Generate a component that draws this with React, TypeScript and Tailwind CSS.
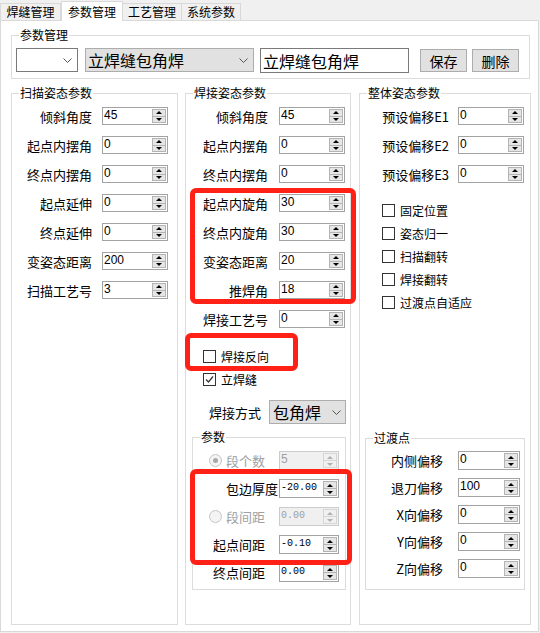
import React from "react";

const CJK = "font-['Noto_Sans_CJK_SC','Liberation_Sans',sans-serif]";

function Arrow({ up, disabled }: { up: boolean; disabled?: boolean }) {
  const cls = up
    ? disabled
      ? "border-b-[3px] border-b-[#b0b0b0]"
      : "border-b-[3px] border-b-black"
    : disabled
      ? "border-t-[3px] border-t-[#b0b0b0]"
      : "border-t-[3px] border-t-black";
  return <div className={`h-0 w-0 border-x-[3px] border-x-transparent ${cls}`} />;
}

function Spin({
  value,
  cls,
  disabled,
  mono,
}: {
  value: string;
  cls: string;
  disabled?: boolean;
  mono?: boolean;
}) {
  return (
    <div
      className={`${cls} flex shrink-0 border ${
        disabled ? "border-[#cccccc] bg-[#f0f0f0]" : "border-[#a3a3a3] bg-white"
      }`}
    >
      <div
        className={`flex-1 pl-[1px] pt-[1px] leading-[13px] ${
          mono
            ? "font-['Liberation_Mono',monospace] text-[10px]"
            : "font-['Liberation_Sans',sans-serif] text-[12px]"
        } ${disabled ? "text-[#a0a0a0]" : "text-black"}`}
      >
        {value}
      </div>
      <div className="flex w-[15px] flex-col py-[1px] pr-[1px]">
        <div
          className={`flex flex-1 items-center justify-center border ${
            disabled ? "border-[#d6d6d6] bg-[#f0f0f0]" : "border-[#b4b4b4] bg-[#e6e6e6]"
          }`}
        >
          <Arrow up disabled={disabled} />
        </div>
        <div
          className={`flex flex-1 items-center justify-center border border-t-0 ${
            disabled ? "border-[#d6d6d6] bg-[#f0f0f0]" : "border-[#b4b4b4] bg-[#e6e6e6]"
          }`}
        >
          <Arrow up={false} disabled={disabled} />
        </div>
      </div>
    </div>
  );
}

function Chevron() {
  return (
    <svg width="9" height="5" viewBox="0 0 9 5" className="shrink-0">
      <path d="M0.5 0.5 L4.5 4.5 L8.5 0.5" fill="none" stroke="#555555" strokeWidth="1" />
    </svg>
  );
}

function Group({
  title,
  cls,
  children,
}: {
  title: string;
  cls: string;
  children?: React.ReactNode;
}) {
  return (
    <div className={`relative shrink-0 border border-[#dcdcdc] ${cls}`}>
      <span className="absolute left-[7px] top-[-8px] bg-white px-[1px] text-[12px] leading-[14px] whitespace-nowrap">
        {title}
      </span>
      {children}
    </div>
  );
}

function Check({ label, checked }: { label: string; checked?: boolean }) {
  return (
    <div className="flex h-[13px] items-center">
      <div className="flex h-[13px] w-[13px] shrink-0 items-center justify-center border border-[#333333] bg-white">
        {checked && (
          <svg width="9" height="9" viewBox="0 0 9 9">
            <path d="M1 4.5 L3.5 7 L8 1.5" fill="none" stroke="#333333" strokeWidth="1.2" />
          </svg>
        )}
      </div>
      <span className="ml-[5px] text-[12px] leading-none whitespace-nowrap">{label}</span>
    </div>
  );
}

function Radio({ checked }: { checked?: boolean }) {
  return (
    <div className="flex h-[13px] w-[13px] shrink-0 items-center justify-center rounded-full border border-[#c4c4c4] bg-[#f4f4f4]">
      {checked && <div className="h-[5px] w-[5px] rounded-full bg-[#a8a8a8]" />}
    </div>
  );
}

function Row({
  label,
  value,
  rowCls,
  spinCls,
}: {
  label: string;
  value: string;
  rowCls: string;
  spinCls: string;
}) {
  return (
    <div className={`flex items-center justify-end ${rowCls}`}>
      <span className="text-[13px] leading-none whitespace-nowrap">{label}</span>
      <Spin value={value} cls={spinCls} />
    </div>
  );
}

export default function App() {
  const leftRows: [string, string][] = [
    ["倾斜角度", "45"],
    ["起点内摆角", "0"],
    ["终点内摆角", "0"],
    ["起点延伸", "0"],
    ["终点延伸", "0"],
    ["变姿态距离", "200"],
    ["扫描工艺号", "3"],
  ];
  const midRows: [string, string][] = [
    ["倾斜角度", "45"],
    ["起点内摆角", "0"],
    ["终点内摆角", "0"],
    ["起点内旋角", "30"],
    ["终点内旋角", "30"],
    ["变姿态距离", "20"],
    ["推焊角", "18"],
    ["焊接工艺号", "0"],
  ];
  const rightRows: [string, string][] = [
    ["预设偏移E1", "0"],
    ["预设偏移E2", "0"],
    ["预设偏移E3", "0"],
  ];
  const transRows: [string, string][] = [
    ["内侧偏移", "0"],
    ["退刀偏移", "100"],
    ["X向偏移", "0"],
    ["Y向偏移", "0"],
    ["Z向偏移", "0"],
  ];

  return (
    <div className={`relative h-[633px] w-[540px] overflow-hidden bg-[#f0f0f0] text-black ${CJK}`}>
      {/* Tabs */}
      <div className="flex h-[20px] items-end">
        <div className="flex h-[17px] w-[61px] items-center justify-center border border-b-0 border-[#d9d9d9] bg-[#f0f0f0] text-[12px] leading-none">
          焊缝管理
        </div>
        <div className="relative z-10 -mb-px flex h-[20px] w-[62px] items-center justify-center border border-b-0 border-[#d9d9d9] bg-white text-[12px] leading-none">
          参数管理
        </div>
        <div className="flex h-[17px] w-[59px] items-center justify-center border border-b-0 border-l-0 border-[#d9d9d9] bg-[#f0f0f0] text-[12px] leading-none">
          工艺管理
        </div>
        <div className="flex h-[17px] w-[59px] items-center justify-center border border-b-0 border-l-0 border-[#d9d9d9] bg-[#f0f0f0] text-[12px] leading-none">
          系统参数
        </div>
      </div>

      {/* Panel */}
      <div className="h-[612px] w-[539px] border border-[#d9d9d9] bg-white pl-[10px]">
        <Group title="参数管理" cls="mt-[14px] h-[44px] w-[519px]">
          <div className="flex items-start pl-[4px] pt-[12px]">
            <div className="flex h-[24px] w-[62px] items-center justify-end border border-[#7a7a7a] bg-white pr-[5px]">
              <Chevron />
            </div>
            <div className="ml-[7px] flex h-[24px] w-[169px] items-center justify-between border border-[#adadad] bg-[#e1e1e1] pl-[2px] pr-[5px]">
              <span className="text-[16px] leading-none whitespace-nowrap">立焊缝包角焊</span>
              <Chevron />
            </div>
            <div className="ml-[6px] flex h-[25px] w-[149px] items-center border border-[#7a7a7a] bg-white pl-[2px]">
              <span className="text-[16px] leading-none whitespace-nowrap">立焊缝包角焊</span>
            </div>
            <div className="ml-[11px] mt-[1px] flex h-[23px] w-[47px] items-center justify-center border border-[#adadad] bg-[#e1e1e1] text-[14px] leading-none">
              保存
            </div>
            <div className="ml-[5px] mt-[1px] flex h-[23px] w-[47px] items-center justify-center border border-[#adadad] bg-[#e1e1e1] text-[14px] leading-none">
              删除
            </div>
          </div>
        </Group>

        <div className="mt-[14px] flex">
          {/* Left group */}
          <Group title="扫描姿态参数" cls="h-[532px] w-[167px]">
            <div className="flex flex-col gap-[11px] pt-[13px]">
              {leftRows.map(([l, v]) => (
                <Row key={l} label={l} value={v} rowCls="h-[18px] gap-[10px] pr-[9px]" spinCls="h-[18px] w-[66px]" />
              ))}
            </div>
          </Group>

          {/* Middle group */}
          <Group title="焊接姿态参数" cls="ml-[7px] flex h-[532px] w-[166px] flex-col">
            <div className="flex flex-col gap-[11px] pt-[13px]">
              {midRows.map(([l, v]) => (
                <Row key={l} label={l} value={v} rowCls="h-[18px] gap-[11px] pr-[5px]" spinCls="h-[18px] w-[66px]" />
              ))}
            </div>
            <div className="mt-[22px] pl-[17px]">
              <Check label="焊接反向" />
            </div>
            <div className="mt-[10px] pl-[17px]">
              <Check label="立焊缝" checked />
            </div>
            <div className="mt-[14px] flex h-[24px] items-center justify-end gap-[8px] pr-[4px]">
              <span className="text-[13px] leading-none whitespace-nowrap">焊接方式</span>
              <div className="flex h-[24px] w-[77px] items-center justify-between border border-[#adadad] bg-[#e1e1e1] pl-[3px] pr-[4px]">
                <span className="text-[16px] leading-none whitespace-nowrap">包角焊</span>
                <Chevron />
              </div>
            </div>
            <Group title="参数" cls="ml-[6px] mt-[13px] h-[153px] w-[154px]">
              <div className="flex flex-col gap-[9px] pt-[13px]">
                <div className="flex h-[19px] items-center pl-[16px] pr-[6px]">
                  <Radio checked />
                  <span className="ml-[4px] text-[13px] leading-none text-[#a0a0a0] whitespace-nowrap">段个数</span>
                  <div className="ml-auto">
                    <Spin value="5" cls="h-[19px] w-[60px]" disabled />
                  </div>
                </div>
                <div className="flex h-[19px] items-center justify-end gap-[1px] pr-[6px]">
                  <span className="text-[13px] leading-none whitespace-nowrap">包边厚度</span>
                  <Spin value="-20.00" cls="h-[19px] w-[60px]" mono />
                </div>
                <div className="flex h-[19px] items-center pl-[16px] pr-[6px]">
                  <Radio />
                  <span className="ml-[4px] text-[13px] leading-none text-[#a0a0a0] whitespace-nowrap">段间距</span>
                  <div className="ml-auto">
                    <Spin value="0.00" cls="h-[19px] w-[60px]" disabled mono />
                  </div>
                </div>
                <div className="flex h-[19px] items-center pl-[20px] pr-[6px]">
                  <span className="text-[13px] leading-none whitespace-nowrap">起点间距</span>
                  <div className="ml-auto">
                    <Spin value="-0.10" cls="h-[19px] w-[60px]" mono />
                  </div>
                </div>
                <div className="flex h-[19px] items-center pl-[20px] pr-[6px]">
                  <span className="text-[13px] leading-none whitespace-nowrap">终点间距</span>
                  <div className="ml-auto">
                    <Spin value="0.00" cls="h-[19px] w-[60px]" mono />
                  </div>
                </div>
              </div>
            </Group>
          </Group>

          {/* Right group */}
          <Group title="整体姿态参数" cls="ml-[8px] flex h-[532px] w-[172px] flex-col">
            <div className="flex flex-col gap-[11px] pt-[13px]">
              {rightRows.map(([l, v]) => (
                <Row key={l} label={l} value={v} rowCls="h-[18px] gap-[9px] pr-[6px]" spinCls="h-[18px] w-[66px]" />
              ))}
            </div>
            <div className="mt-[21px] flex flex-col gap-[10px] pl-[22px]">
              <Check label="固定位置" />
              <Check label="姿态归一" />
              <Check label="扫描翻转" />
              <Check label="焊接翻转" />
              <Check label="过渡点自适应" />
            </div>
            <Group title="过渡点" cls="mb-[34px] ml-[5px] mt-auto h-[152px] w-[160px]">
              <div className="flex flex-col gap-[8px] pt-[12px]">
                {transRows.map(([l, v]) => (
                  <Row key={l} label={l} value={v} rowCls="h-[19px] gap-[15px] pr-[4px]" spinCls="h-[19px] w-[62px]" />
                ))}
              </div>
            </Group>
          </Group>
        </div>
      </div>

      {/* Red annotation boxes */}
      <div className="absolute left-[190px] top-[188px] h-[116px] w-[166px] rounded-[6px] border-[5px] border-[#ff2116]" />
      <div className="absolute left-[185px] top-[333px] h-[38px] w-[113px] rounded-[6px] border-[5px] border-[#ff2116]" />
      <div className="absolute left-[190px] top-[469px] h-[96px] w-[162px] rounded-[6px] border-[5px] border-[#ff2116]" />
    </div>
  );
}
